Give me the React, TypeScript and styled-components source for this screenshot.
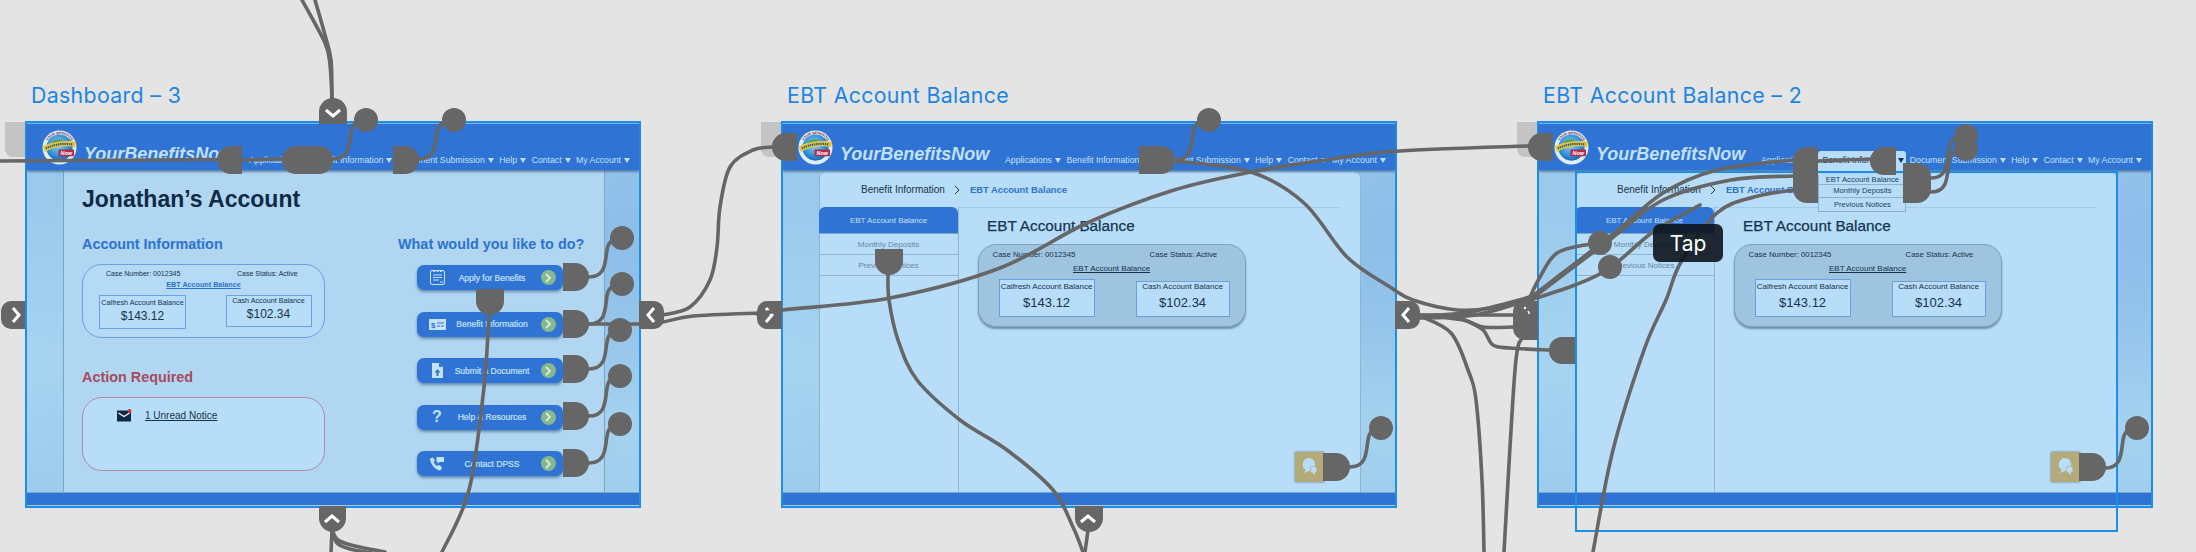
import React from "react";
import styled, { createGlobalStyle } from "styled-components";

const WIRE = "#666666";
const SELECT = "#1b90e8";
const BLUE = "#2f74d4";
const PANEL = "#b7ddf8";

const Global = createGlobalStyle`
  html, body { margin: 0; padding: 0; background: #e4e4e4; }
  #root { width: 2196px; height: 552px; overflow: hidden; }
`;

const Canvas = styled.div`
  position: relative;
  width: 2196px;
  height: 552px;
  overflow: hidden;
  background: #e4e4e4;
  font-family: "Liberation Sans", Arial, sans-serif;
`;

const FrameTitle = styled.div<{ $left: number }>`
  position: absolute;
  left: ${(p) => p.$left}px;
  top: 81px;
  font-family: Inter, "Liberation Sans", sans-serif;
  font-size: 21.3px;
  line-height: 28px;
  letter-spacing: 0.35px;
  color: #1b84e4;
  white-space: nowrap;
`;

const Frame = styled.section<{ $left: number }>`
  position: absolute;
  isolation: isolate;
  left: ${(p) => p.$left}px;
  top: 121px;
  width: 616px;
  height: 387px;
  box-sizing: border-box;
  border: 2px solid ${SELECT};
  display: flex;
  flex-direction: column;
`;

const HomeTab = styled.div`
  position: absolute;
  left: -22px;
  top: -1px;
  width: 20px;
  height: 35px;
  background: #c4c4c4;
  border-bottom-left-radius: 8px;
`;

const Header = styled.header`
  position: relative;
  z-index: 2;
  height: 47px;
  flex: none;
  box-sizing: border-box;
  display: flex;
  align-items: flex-end;
  padding: 0 9px 0 15px;
  background: ${BLUE};
  border-top: 1px solid #7fb3e6;
  box-shadow: 0 2px 2px rgba(70, 105, 140, 0.75);
`;

const LogoWrap = styled.svg`
  flex: none;
  width: 35px;
  height: 35px;
  margin-bottom: 5px;
`;

const Brand = styled.div`
  margin: 0 0 6px 7px;
  font-size: 18px;
  line-height: 20px;
  font-weight: 700;
  font-style: italic;
  color: #c2e1f9;
  white-space: nowrap;
`;

const Nav = styled.nav`
  position: relative;
  margin-left: auto;
  display: flex;
  align-items: center;
  gap: 5.5px;
  margin-bottom: 4px;
`;

const NavItem = styled.div<{ $active?: boolean }>`
  position: relative;
  z-index: 1;
  display: flex;
  align-items: center;
  gap: 3px;
  font-size: 8.7px;
  line-height: 12px;
  white-space: nowrap;
  color: ${(p) => (p.$active ? "#17324d" : "#c3e0f8")};
  &::before {
    content: "";
    display: ${(p) => (p.$active ? "block" : "none")};
    position: absolute;
    z-index: -1;
    left: -4px;
    right: -2px;
    top: -3px;
    bottom: -5px;
    background: ${PANEL};
    border-radius: 3px 3px 0 0;
  }
`;

const Caret = styled.i<{ $dark?: boolean }>`
  display: block;
  width: 0;
  height: 0;
  border-left: 3px solid transparent;
  border-right: 3px solid transparent;
  border-top: 5px solid ${(p) => (p.$dark ? "#17324d" : "#c3e0f8")};
`;

const Dropdown = styled.div`
  position: absolute;
  z-index: 3;
  left: -4px;
  right: -2px;
  top: 21px;
  box-sizing: border-box;
  height: 37px;
  display: grid;
  grid-template-rows: 10px 13px 14px;
  background: ${PANEL};
  border: 1px solid #8fb0c9;
  border-top: 0;
`;

const DropItem = styled.div`
  display: flex;
  align-items: center;
  justify-content: center;
  font-size: 7.6px;
  color: #21405e;
  border-bottom: 1px solid #8fb0c9;
  &:last-child { border-bottom: 0; }
`;

const Body = styled.main`
  flex: 1;
  display: flex;
  padding: 0 34px 0 36px;
  min-height: 0;
  background:
    radial-gradient(circle at 98% 20%, #8dbee9 0, transparent 28%),
    radial-gradient(circle at 2% 60%, #a6d4f1 0, transparent 26%),
    radial-gradient(circle at 98% 80%, #a4d2ef 0, transparent 24%),
    #9ac9ec;
`;

const Footer = styled.footer`
  height: 14px;
  flex: none;
  background: ${BLUE};
  border-top: 1px solid #7ea6c9;
  border-bottom: 1px solid #a9c8e2;
  box-sizing: border-box;
`;

const DashPanel = styled.div`
  flex: 1;
  box-sizing: border-box;
  padding: 15px 0 0 18px;
  background: #b0d6f1;
  border-left: 1px solid #7fa3c3;
  border-right: 1px solid #7fa3c3;
`;

const PageTitle = styled.h1`
  margin: 0;
  font-size: 23px;
  line-height: 28px;
  font-weight: 700;
  color: #0e2a45;
`;

const DashColumns = styled.div`
  display: grid;
  grid-template-columns: 243px 190px;
  column-gap: 73px;
  margin-top: 22px;
`;

const Column = styled.div`
  display: flex;
  flex-direction: column;
`;

const SectionHead = styled.h2<{ $alert?: boolean }>`
  margin: ${(p) => (p.$alert ? "30px 0 0" : "0")};
  font-size: 14.4px;
  line-height: 18px;
  font-weight: 700;
  white-space: nowrap;
  color: ${(p) => (p.$alert ? "#a84a5e" : "#2e72cf")};
`;

const InfoCard = styled.div<{ $alert?: boolean }>`
  box-sizing: border-box;
  margin-top: 11px;
  height: 74px;
  border-radius: 20px;
  border: 1px solid ${(p) => (p.$alert ? "#b08aa6" : "#6e9fe0")};
  background: ${(p) => (p.$alert ? PANEL : "#b4daf5")};
`;

const CaseRow = styled.div`
  display: grid;
  font-size: 7px;
  line-height: 9px;
  color: #17324d;
  white-space: nowrap;
`;

const DashCaseRow = styled(CaseRow)`
  grid-template-columns: 131px auto;
  padding: 4px 0 0 23px;
`;

const DashLink = styled.a`
  display: block;
  margin-top: 2px;
  text-align: center;
  font-size: 7.2px;
  line-height: 9px;
  font-weight: 700;
  color: #2e72cf;
  text-decoration: underline;
`;

const BoxRow = styled.div`
  display: flex;
  align-items: flex-start;
`;

const DashBoxRow = styled(BoxRow)`
  margin: 6px 0 0 16px;
  gap: 39.5px;
`;

const AmountBox = styled.div<{ $w: number; $h: number }>`
  box-sizing: border-box;
  width: ${(p) => p.$w}px;
  height: ${(p) => p.$h}px;
  display: flex;
  flex-direction: column;
  align-items: center;
  justify-content: flex-end;
  background: ${PANEL};
  border: 1px solid #6e9fe0;
  color: #17324d;
  white-space: nowrap;
`;

const DashBoxLabel = styled.span`
  font-size: 7.2px;
  line-height: 9px;
`;

const DashAmount = styled.span`
  margin: 3px 0 6px;
  font-size: 12px;
  line-height: 12px;
`;

const NoticeRow = styled.div`
  display: flex;
  align-items: center;
  gap: 13px;
  padding: 11px 0 0 34px;
`;

const NoticeLink = styled.a`
  font-size: 10px;
  line-height: 12px;
  color: #17324d;
  text-decoration: underline;
`;

const ActionList = styled.div`
  display: flex;
  flex-direction: column;
  gap: 21.5px;
  margin: 12px 0 0 19px;
  width: 146px;
`;

const ActionButton = styled.div`
  position: relative;
  height: 25px;
  border-radius: 7px;
  background: ${BLUE};
  box-shadow: 0 2px 3px rgba(50, 90, 130, 0.6);
  display: grid;
  grid-template-columns: 36px 1fr 30px;
  align-items: center;
  color: #c5e2f8;
`;

const ActionIcon = styled.span`
  display: flex;
  justify-content: center;
  align-items: center;
  padding-left: 4px;
  font-size: 16px;
  font-weight: 700;
`;

const ActionLabel = styled.span`
  text-align: center;
  font-size: 8.5px;
  font-weight: 400;
  -webkit-text-stroke: 0.2px #c5e2f8;
  white-space: nowrap;
  transform: translateX(-1px);
`;

const GoDot = styled.span`
  justify-self: center;
  width: 15px;
  height: 15px;
  border-radius: 50%;
  background: #86b88e;
  display: flex;
  align-items: center;
  justify-content: center;
`;

const EbtPanel = styled.div`
  position: relative;
  flex: 1;
  margin-top: 2px;
  display: grid;
  grid-template-columns: 140px 1fr;
  grid-template-rows: 35px 1fr;
  background: ${PANEL};
  border-radius: 6px 6px 0 0;
  box-shadow: inset -1px 0 0 #8fb3d0, inset 1px 0 0 #8fb3d0;
`;

const Crumbs = styled.div`
  grid-column: 1 / 3;
  display: flex;
  align-items: center;
  padding-left: 42px;
  font-size: 10px;
  color: #17324d;
  white-space: nowrap;
`;

const CrumbSep = styled.span`
  width: 25px;
  display: flex;
  justify-content: center;
`;

const CrumbNow = styled.span`
  color: #2e72cf;
  font-weight: 700;
  font-size: 9.4px;
`;

const SideNav = styled.aside`
  display: flex;
  flex-direction: column;
  border-right: 1px solid #8fb3d0;
`;

const SideTab = styled.div`
  height: 27px;
  display: flex;
  align-items: center;
  justify-content: center;
  background: ${BLUE};
  border-radius: 6px 6px 0 0;
  border-bottom: 1px solid #7ea6c9;
  box-sizing: border-box;
  font-size: 8px;
  color: #c3e0f8;
`;

const SideItem = styled.div`
  height: 21px;
  box-sizing: border-box;
  display: flex;
  align-items: center;
  justify-content: center;
  border-bottom: 1px solid #93b7d3;
  font-size: 8px;
  color: #68879f;
`;

const EbtMain = styled.div`
  margin-right: 20px;
  padding: 9px 0 0 18.6px;
  border-top: 1px solid #a5cbe6;
`;

const EbtTitle = styled.h2`
  margin: 0 0 0 9.4px;
  font-size: 15.3px;
  line-height: 18px;
  font-weight: 400;
  -webkit-text-stroke: 0.25px #15344f;
  color: #15344f;
  white-space: nowrap;
`;

const BalanceCard = styled.div`
  box-sizing: border-box;
  margin-top: 9px;
  width: 268px;
  height: 83px;
  border-radius: 18px;
  background: #9fc4df;
  border: 1px solid #7ea3bf;
  box-shadow: 0 2px 2px rgba(60, 95, 125, 0.6);
`;

const EbtCaseRow = styled(CaseRow)`
  grid-template-columns: 157px auto;
  padding: 5px 0 0 14px;
  font-size: 7.8px;
  line-height: 10px;
`;

const EbtLink = styled.a`
  display: block;
  margin-top: 4px;
  text-align: center;
  font-size: 8px;
  line-height: 10px;
  color: #17324d;
  text-decoration: underline;
`;

const EbtBoxRow = styled(BoxRow)`
  margin: 5px 0 0 20px;
  gap: 41px;
  align-items: flex-end;
`;

const EbtBoxLabel = styled.span`
  font-size: 8px;
  line-height: 10px;
`;

const EbtAmount = styled.span`
  margin: 4px 0 7px;
  font-size: 13px;
  line-height: 13px;
`;

const ChatButton = styled.div`
  position: absolute;
  right: 37px;
  bottom: 10px;
  width: 29px;
  height: 30px;
  background: #b5aa7a;
  box-shadow: 0 0 2px rgba(50, 90, 120, 0.8);
  display: flex;
  align-items: center;
  justify-content: center;
`;

const SelectionBox = styled.div`
  position: absolute;
  left: 1575px;
  top: 171px;
  width: 543px;
  height: 361px;
  box-sizing: border-box;
  border: 2px solid ${SELECT};
`;

const Links = styled.svg`
  position: absolute;
  left: 0;
  top: 0;
  width: 2196px;
  height: 552px;
  pointer-events: none;
`;

const Tap = styled.div`
  position: absolute;
  left: 1653px;
  top: 224px;
  width: 70px;
  height: 38px;
  border-radius: 7px;
  background: rgba(12, 20, 28, 0.9);
  color: #fff;
  font-family: Inter, "Liberation Sans", sans-serif;
  font-size: 21px;
  display: flex;
  align-items: center;
  justify-content: center;
`;

/* ---------- drawings ---------- */

const Logo = () => (
  <LogoWrap viewBox="0 0 36 36">
    <defs>
      <radialGradient id="globe" cx="45%" cy="40%" r="60%">
        <stop offset="0" stopColor="#8fd4f2" />
        <stop offset="0.7" stopColor="#2f8fd8" />
        <stop offset="1" stopColor="#1f68b8" />
      </radialGradient>
    </defs>
    <circle cx="18" cy="18" r="17.5" fill="#dfeef8" />
    <circle cx="18" cy="18" r="13.5" fill="url(#globe)" />
    <path d="M10 12c4-3 9-3 12-1-2 3-7 2-8 5-1 3-4 1-4-4zM22 22c3-1 6 0 5 3-2 3-5 2-5-3z" fill="#4fa36a" />
    <path d="M1 17C8 12 26 10 35 12l-1 6C24 15 10 18 3 23z" fill="#e8c53a" />
    <path d="M4 19C11 15 23 13 32 15" fill="none" stroke="#2c5a8c" strokeWidth="2.2" strokeDasharray="1.4 .8" />
    <rect x="17" y="20" width="16" height="7" rx="1" fill="#b02c4c" />
    <text x="25" y="26" fontSize="5.6" fontStyle="italic" fontWeight="700" textAnchor="middle" fill="#fff" fontFamily="Liberation Sans">Now</text>
    <path id="logoArc" d="M5 13A14 14 0 0 1 31 13" fill="none" />
    <text fontSize="3.6" fontWeight="700" fill="#7a2440" fontFamily="Liberation Sans">
      <textPath href="#logoArc" startOffset="6%">YOUR BENEFITS</textPath>
    </text>
  </LogoWrap>
);

const ApplyIcon = () => (
  <svg width="15" height="15" viewBox="0 0 15 15" fill="none" stroke="#c5e2f8">
    <rect x="0.5" y="0.5" width="14" height="14" rx="1.5" />
    <path d="M3 1.5h2M6.5 1.5h2M10 1.5h2M3 5h9M3 7.5h9M3 10h6M10 12h3" strokeWidth="1.1" />
  </svg>
);

const MoneyIcon = () => (
  <svg width="17" height="11" viewBox="0 0 17 11">
    <rect width="17" height="11" fill="#c5e2f8" />
    <text x="2" y="8.5" fontSize="8" fontWeight="700" fill="#2f74d4" fontFamily="Liberation Sans">$</text>
    <path d="M8 4h7M8 7h3M12 7h3" stroke="#2f74d4" strokeWidth="1" />
  </svg>
);

const UploadIcon = () => (
  <svg width="11" height="15" viewBox="0 0 11 15">
    <path d="M0 0h7l4 4v11H0z" fill="#c5e2f8" />
    <path d="M7 0v4h4" fill="#2f74d4" />
    <path d="M5.5 6L2.5 9.5h2V13h2V9.5h2z" fill="#2f74d4" />
  </svg>
);

const PhoneIcon = () => (
  <svg width="14" height="14" viewBox="0 0 14 14" fill="#c5e2f8">
    <path d="M0.5 1.2 3 0.4l2 3.2-1.4 1.3c.7 1.8 2 3.2 3.7 4.1l1.4-1.3 3.2 2.3-.8 2.5c-.3.8-1.2 1.1-2 .9C4.6 11.8 1.4 8 .1 3c-.2-.7-.1-1.4.4-1.8z" />
    <path d="M6.5 0H14v5H9.5L7.8 7V5H6.5z" />
  </svg>
);

const GoChevron = () => (
  <svg width="8" height="10" viewBox="0 0 8 10" fill="none" stroke="#d6ecd8" strokeWidth="1.8">
    <path d="M2 1l4 4-4 4" />
  </svg>
);

const CrumbChevron = () => (
  <svg width="6" height="10" viewBox="0 0 6 10" fill="none" stroke="#17324d" strokeWidth="1">
    <path d="M1 1l4 4-4 4" />
  </svg>
);

const MailIcon = () => (
  <svg width="15" height="13" viewBox="0 0 15 13">
    <rect y="1.5" width="14" height="11" fill="#0e2a45" />
    <path d="M1.5 4l5.5 3.5L12.5 4" fill="none" stroke="#fff" strokeWidth="1.2" />
    <circle cx="12.5" cy="2" r="2" fill="#d7303f" />
  </svg>
);

const ChatIcon = () => (
  <svg width="17" height="20" viewBox="0 0 17 20" fill={PANEL}>
    <path d="M7.5 1a6.5 6.5 0 0 1 3 12.3c-1 .4-1.7.7-2.5.7L3 16l1.6-3.2A6.5 6.5 0 0 1 7.5 1z" />
    <path d="M12.5 9a3.6 3.6 0 0 1 1.6 6.8L14.5 19l-3-2.8a3.7 3.7 0 0 1 1-7.2z" stroke="#b5aa7a" strokeWidth="0.8" />
  </svg>
);

/* ---------- prototype links ---------- */

type Pt = [number, number];

const smooth = (pts: Pt[]) => {
  let d = `M${pts[0][0]} ${pts[0][1]}`;
  for (let i = 0; i < pts.length - 1; i++) {
    const p0 = pts[i - 1] || pts[i];
    const p1 = pts[i];
    const p2 = pts[i + 1];
    const p3 = pts[i + 2] || p2;
    const c1x = p1[0] + (p2[0] - p0[0]) / 6;
    const c1y = p1[1] + (p2[1] - p0[1]) / 6;
    const c2x = p2[0] - (p3[0] - p1[0]) / 6;
    const c2y = p2[1] - (p3[1] - p1[1]) / 6;
    d += `C${c1x.toFixed(1)} ${c1y.toFixed(1)} ${c2x.toFixed(1)} ${c2y.toFixed(1)} ${p2[0]} ${p2[1]}`;
  }
  return d;
};

const blob = (x: number, y: number, w: number, h: number, tl: number, tr: number, br: number, bl: number) =>
  `M${x + tl} ${y}H${x + w - tr}A${tr} ${tr} 0 0 1 ${x + w} ${y + tr}V${y + h - br}A${br} ${br} 0 0 1 ${x + w - br} ${y + h}H${x + bl}A${bl} ${bl} 0 0 1 ${x} ${y + h - bl}V${y + tl}A${tl} ${tl} 0 0 1 ${x + tl} ${y}Z`;

const hook = (x: number, y: number, cx: number, cy: number) =>
  `M${x} ${y}C${x + 17} ${y} ${x + 16} ${y - 15} ${x + 18} ${cy + 12}C${x + 19} ${cy + 5} ${x + 23} ${cy} ${cx} ${cy}`;

const wires: string[] = [
  // dashboard
  smooth([[0, 161], [217, 159.5]]),
  smooth([[242, 160], [282, 159]]),
  hook(333, 159, 366, 120),
  hook(419, 159, 454, 120),
  smooth([[332, 100], [330, 65], [325, 43], [302, 0]]),
  smooth([[332, 100], [331, 60], [325, 35], [315, 0]]),
  smooth([[332, 530], [338, 540], [355, 546], [385, 552]]),
  smooth([[332, 530], [337, 543], [350, 549], [372, 553]]),
  smooth([[332, 530], [331, 553]]),
  smooth([[489, 313], [484, 387], [469, 490], [442, 552]]),
  hook(589, 277, 622, 238),
  hook(589, 324, 622, 284),
  hook(589, 369, 620, 330),
  hook(589, 416, 620, 376),
  hook(589, 463, 620, 424),
  smooth([[589, 324], [645, 324]]),
  // dashboard to EBT
  smooth([[640, 324], [663, 322], [693, 316], [760, 313]]),
  smooth([[663, 315], [690, 307], [710, 280], [717, 247], [720, 207], [730, 167], [753, 150], [772, 147]]),
  // EBT
  smooth([[757, 314], [783, 310], [890, 298], [1000, 268], [1087, 223], [1174, 190], [1251, 172], [1325, 160], [1400, 151], [1528, 146]]),
  smooth([[1175, 161], [1251, 172], [1304, 203], [1347, 257], [1390, 287], [1413, 300], [1457, 310], [1490, 308], [1530, 297], [1560, 275], [1600, 245]]),
  hook(1175, 160, 1209, 120),
  smooth([[888, 272], [889, 300], [898, 340], [917, 380], [960, 420], [1007, 450], [1053, 490], [1073, 527], [1083, 552]]),
  smooth([[1088, 530], [1085, 552]]),
  hook(1350, 467, 1381, 428),
  // EBT 2
  hook(2105, 468, 2137, 428),
  smooth([[1420, 315], [1513, 315]]),
  smooth([[1420, 315], [1463, 320], [1483, 327], [1513, 327]]),
  smooth([[1420, 316], [1451, 333], [1468, 370], [1476, 400], [1482, 480], [1484, 552]]),
  smooth([[1465, 320], [1483, 330], [1493, 345], [1510, 348], [1549, 350]]),
  smooth([[1522, 338], [1515, 370], [1504, 552]]),
  smooth([[1420, 316], [1470, 312], [1530, 297]]),
  smooth([[1420, 318], [1475, 315], [1532, 299]]),
  smooth([[1530, 297], [1540, 277], [1557, 253], [1590, 244]]),
  smooth([[1530, 298], [1612, 235], [1663, 193], [1717, 170], [1793, 160]]),
  smooth([[1530, 300], [1612, 238], [1663, 200], [1731, 180], [1793, 176]]),
  smooth([[1530, 300], [1575, 285], [1610, 268], [1653, 232], [1700, 205]]),
  smooth([[1793, 190], [1754, 197], [1717, 213], [1681, 262], [1666, 300], [1644, 350], [1613, 450], [1593, 552]]),
  smooth([[1818, 161], [1872, 159]]),
  hook(1931, 178, 1966, 136),
  hook(1931, 192, 1966, 149),
];

const blobs: string[] = [
  // dashboard header
  blob(217, 146, 25, 28, 14, 0, 0, 14),
  blob(282, 146, 51, 28, 14, 14, 14, 14),
  blob(393, 146, 26, 28, 0, 14, 14, 0),
  // dashboard buttons
  ...[263, 310, 355, 402, 449].map((y) => blob(563, y, 26, 28, 0, 14, 14, 0)),
  blob(476, 289, 28, 26, 0, 0, 14, 14),
  // handles
  blob(319, 98, 28, 26, 14, 14, 0, 0),
  blob(319, 506, 27, 26, 0, 0, 14, 14),
  blob(1, 301, 24, 28, 10, 0, 0, 10),
  blob(639, 301, 25, 28, 0, 10, 10, 0),
  blob(757, 301, 25, 28, 10, 0, 0, 10),
  blob(1395, 301, 25, 28, 0, 10, 10, 0),
  blob(1075, 506, 28, 26, 0, 0, 14, 14),
  blob(1513, 301, 25, 28, 10, 0, 0, 10),
  blob(1513, 312, 25, 28, 12, 0, 0, 12),
  blob(1549, 337, 26, 27, 13, 0, 0, 13),
  // EBT
  blob(772, 133, 25, 28, 14, 0, 0, 14),
  blob(1139, 146, 36, 28, 0, 14, 14, 0),
  blob(875, 249, 28, 26, 0, 0, 14, 14),
  blob(1323, 453, 27, 28, 0, 14, 14, 0),
  // EBT 2
  blob(1528, 133, 25, 28, 14, 0, 0, 14),
  blob(1793, 147, 25, 56, 14, 0, 0, 14),
  blob(1870, 147, 26, 28, 14, 0, 0, 14),
  blob(1903, 163, 28, 40, 0, 14, 14, 0),
  blob(2079, 453, 27, 28, 0, 14, 14, 0),
];

const dots: Pt[] = [
  [366, 120], [454, 120],
  [622, 238], [622, 284], [620, 330], [620, 376], [620, 424],
  [1209, 120], [1381, 428],
  [1600, 243], [1610, 267],
  [1966, 136], [1966, 149], [2137, 428],
];

const chevrons: string[] = [
  "M326 110l7 6 7-6",
  "M325 522l7-6 7 6",
  "M1081 522l7-6 7 6",
  "M13 308l6 7-6 7",
  "M654 308l-6 7 6 7",
  "M1409 308l-6 7 6 7",
  "M766 308l6 7-6 7",
];

const LinksLayer = () => (
  <Links viewBox="0 0 2196 552">
    <g fill="none" stroke={WIRE} strokeWidth="3.6" strokeLinecap="round">
      {wires.map((d, i) => (
        <path key={i} d={d} />
      ))}
    </g>
    <g fill={WIRE}>
      {blobs.map((d, i) => (
        <path key={i} d={d} />
      ))}
      {dots.map(([cx, cy], i) => (
        <circle key={i} cx={cx} cy={cy} r="12" />
      ))}
    </g>
    <g fill="none" stroke="#fff" strokeWidth="3">
      {chevrons.map((d, i) => (
        <path key={i} d={d} />
      ))}
    </g>
    <path d="M757 314L783 310" fill="none" stroke={WIRE} strokeWidth="4" />
    <circle cx="1525" cy="308" r="1.2" fill="#fff" />
    <path d="M1528 311l1.5 3" stroke="#fff" strokeWidth="1.5" />
  </Links>
);

/* ---------- page parts ---------- */

const navItems = ["Applications", "Benefit Information", "Document Submission", "Help", "Contact", "My Account"];

const SiteHeader = ({ open }: { open?: boolean }) => (
  <Header>
    <Logo />
    <Brand>YourBenefitsNow</Brand>
    <Nav>
      {navItems.map((label) => {
        const active = open && label === "Benefit Information";
        return (
          <NavItem key={label} $active={active}>
            {label}
            <Caret $dark={active} />
            {active && (
              <Dropdown>
                <DropItem>EBT Account Balance</DropItem>
                <DropItem>Monthly Deposits</DropItem>
                <DropItem>Previous Notices</DropItem>
              </Dropdown>
            )}
          </NavItem>
        );
      })}
    </Nav>
  </Header>
);

const actions: { label: string; icon: React.ReactNode }[] = [
  { label: "Apply for Benefits", icon: <ApplyIcon /> },
  { label: "Benefit Information", icon: <MoneyIcon /> },
  { label: "Submit a Document", icon: <UploadIcon /> },
  { label: "Help & Resources", icon: "?" },
  { label: "Contact DPSS", icon: <PhoneIcon /> },
];

const Dashboard = () => (
  <DashPanel>
    <PageTitle>Jonathan’s Account</PageTitle>
    <DashColumns>
      <Column>
        <SectionHead>Account Information</SectionHead>
        <InfoCard>
          <DashCaseRow>
            <span>Case Number: 0012345</span>
            <span>Case Status: Active</span>
          </DashCaseRow>
          <DashLink>EBT Account Balance</DashLink>
          <DashBoxRow>
            <AmountBox $w={87} $h={34}>
              <DashBoxLabel>Calfresh Account Balance</DashBoxLabel>
              <DashAmount>$143.12</DashAmount>
            </AmountBox>
            <AmountBox $w={86} $h={32}>
              <DashBoxLabel>Cash Account Balance</DashBoxLabel>
              <DashAmount>$102.34</DashAmount>
            </AmountBox>
          </DashBoxRow>
        </InfoCard>
        <SectionHead $alert>Action Required</SectionHead>
        <InfoCard $alert>
          <NoticeRow>
            <MailIcon />
            <NoticeLink>1 Unread Notice</NoticeLink>
          </NoticeRow>
        </InfoCard>
      </Column>
      <Column>
        <SectionHead>What would you like to do?</SectionHead>
        <ActionList>
          {actions.map((a) => (
            <ActionButton key={a.label}>
              <ActionIcon>{a.icon}</ActionIcon>
              <ActionLabel>{a.label}</ActionLabel>
              <GoDot>
                <GoChevron />
              </GoDot>
            </ActionButton>
          ))}
        </ActionList>
      </Column>
    </DashColumns>
  </DashPanel>
);

const EbtBalance = () => (
  <EbtPanel>
    <Crumbs>
      Benefit Information
      <CrumbSep>
        <CrumbChevron />
      </CrumbSep>
      <CrumbNow>EBT Account Balance</CrumbNow>
    </Crumbs>
    <SideNav>
      <SideTab>EBT Account Balance</SideTab>
      <SideItem>Monthly Deposits</SideItem>
      <SideItem>Previous Notices</SideItem>
    </SideNav>
    <EbtMain>
      <EbtTitle>EBT Account Balance</EbtTitle>
      <BalanceCard>
        <EbtCaseRow>
          <span>Case Number: 0012345</span>
          <span>Case Status: Active</span>
        </EbtCaseRow>
        <EbtLink>EBT Account Balance</EbtLink>
        <EbtBoxRow>
          <AmountBox $w={96} $h={38}>
            <EbtBoxLabel>Calfresh Account Balance</EbtBoxLabel>
            <EbtAmount>$143.12</EbtAmount>
          </AmountBox>
          <AmountBox $w={94} $h={36}>
            <EbtBoxLabel>Cash Account Balance</EbtBoxLabel>
            <EbtAmount>$102.34</EbtAmount>
          </AmountBox>
        </EbtBoxRow>
      </BalanceCard>
    </EbtMain>
    <ChatButton>
      <ChatIcon />
    </ChatButton>
  </EbtPanel>
);

export default function App() {
  return (
    <Canvas>
      <Global />
      <FrameTitle $left={31}>Dashboard – 3</FrameTitle>
      <FrameTitle $left={787}>EBT Account Balance</FrameTitle>
      <FrameTitle $left={1543}>EBT Account Balance – 2</FrameTitle>

      <Frame $left={25}>
        <HomeTab />
        <SiteHeader />
        <Body>
          <Dashboard />
        </Body>
        <Footer />
      </Frame>
      <Frame $left={781}>
        <HomeTab />
        <SiteHeader />
        <Body>
          <EbtBalance />
        </Body>
        <Footer />
      </Frame>
      <Frame $left={1537}>
        <HomeTab />
        <SiteHeader open />
        <Body>
          <EbtBalance />
        </Body>
        <Footer />
      </Frame>
      <SelectionBox />
      <LinksLayer />
      <Tap>Tap</Tap>
    </Canvas>
  );
}
